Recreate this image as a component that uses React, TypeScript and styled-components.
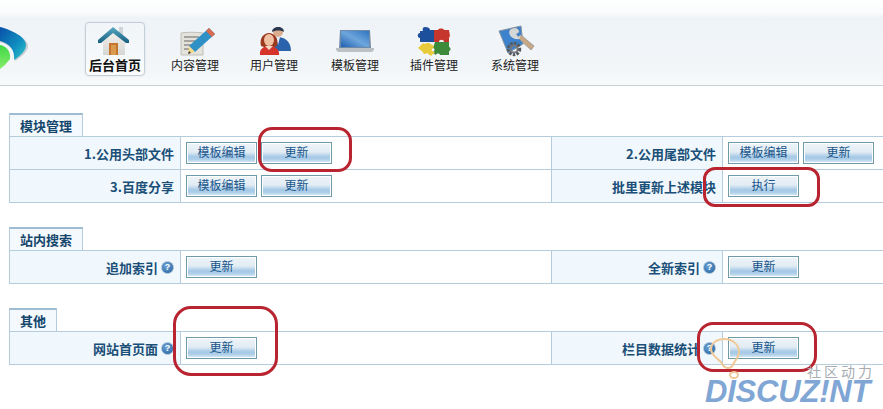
import React from 'react';
import styled, { createGlobalStyle } from 'styled-components';

const GlobalStyle = createGlobalStyle`
  html, body {
    margin: 0;
    padding: 0;
    background: #fff;
    overflow: hidden;
  }
  body {
    font-family: "Noto Sans CJK SC", "Liberation Sans", sans-serif;
    font-size: 12px;
  }
`;

const Page = styled.div`
  position: relative;
  width: 883px;
  height: 409px;
  overflow: hidden;
`;

const Header = styled.header`
  display: flex;
  align-items: flex-start;
  height: 86px;
  box-sizing: border-box;
  padding-top: 22px;
  background: linear-gradient(#fdfefe 0, #fbfcfd 12px, #eef3f7 18px, #f3f6f9 70px, #f8fafb 86px);
  border-bottom: 1px solid #c6d0d6;
`;

const Logo = styled.svg`
  flex: none;
  width: 30px;
  height: 44px;
  margin: 5px 55px 0 0;
`;

const Nav = styled.nav`
  display: flex;
`;

const NavItem = styled.a<{ $active?: boolean; $width: number }>`
  display: flex;
  flex-direction: column;
  align-items: center;
  box-sizing: border-box;
  width: ${(p) => p.$width}px;
  height: 54px;
  padding-top: 3px;
  color: #222;
  font-size: 12px;
  line-height: 16px;
  border-radius: 4px;
  ${(p) =>
    p.$active &&
    `
    margin-right: 10px;
    font-weight: 700;
    font-size: 13px;
    color: #111;
    background: linear-gradient(#f1f5f8, #f9fbfc);
    border: 1px solid #c3ced6;
    box-shadow: 0 0 2px #d5dde3;
    padding-top: 2px;
  `}
`;

const NavIcon = styled.svg`
  flex: none;
  width: 36px;
  height: 32px;
  overflow: visible;
`;

const Content = styled.main`
  padding: 27px 0 0 9px;
  width: 874px;
`;

const Section = styled.section`
  margin-bottom: 24px;
`;

const Tab = styled.div`
  width: fit-content;
  box-sizing: border-box;
  height: 23px;
  padding: 0 10px;
  line-height: 21px;
  font-size: 13px;
  font-weight: 700;
  color: #14456b;
  background: #f3f9fd;
  border: 1px solid #b4ccdc;
  border-top: 2px solid #9fbdd2;
  border-bottom: 0;
`;

const Table = styled.div`
  display: grid;
  grid-template-columns: 172px 370px 172px 160px;
  grid-auto-rows: 33px;
  border-bottom: 1px solid #b4ccdc;
`;

const Label = styled.div`
  display: flex;
  align-items: center;
  justify-content: flex-end;
  gap: 3px;
  padding-right: 6px;
  font-size: 13px;
  font-weight: 700;
  color: #1a4f78;
  background: #f1f8fd;
  border-top: 1px solid #b4ccdc;
  border-left: 1px solid #b4ccdc;
  border-right: 1px solid #b4ccdc;
`;

const Value = styled.div`
  display: flex;
  align-items: center;
  gap: 4px;
  padding-left: 5px;
  background: #fff;
  border-top: 1px solid #b4ccdc;
`;

const Button = styled.button`
  box-sizing: border-box;
  width: 71px;
  height: 22px;
  padding: 0 0 3px;
  font-family: inherit;
  font-size: 12px;
  line-height: 16px;
  color: #17558a;
  border: 1px solid #6f9aa8;
  background: linear-gradient(#eef4f9 0, #e2ecf4 45%, #a4c8e6 70%, #b2d1ea 84%, #e8f1f8 100%);
  box-shadow: inset 0 0 0 1px #fff;
`;

const Help = styled.span`
  flex: none;
  box-sizing: border-box;
  width: 13px;
  height: 13px;
  border-radius: 50%;
  background: radial-gradient(circle at 40% 35%, #6ea3d6, #1f5f9e);
  border: 1px solid #a9c0d4;
  color: #fff;
  font-family: "Liberation Sans", sans-serif;
  font-size: 9px;
  font-weight: 700;
  line-height: 11px;
  text-align: center;
`;

const Ring = styled.div<{ $x: number; $y: number; $w: number; $h: number; $r: number }>`
  position: absolute;
  left: ${(p) => p.$x}px;
  top: ${(p) => p.$y}px;
  width: ${(p) => p.$w}px;
  height: ${(p) => p.$h}px;
  box-sizing: border-box;
  border: 3px solid #b8242f;
  border-radius: ${(p) => p.$r}px;
  pointer-events: none;
`;

const Watermark = styled.div`
  position: absolute;
  left: 703px;
  top: 361px;
  width: 180px;
  pointer-events: none;
`;

const WatermarkCaption = styled.div`
  position: absolute;
  left: 104px;
  top: 4px;
  font-size: 14px;
  line-height: 13px;
  letter-spacing: 3px;
  color: #a7adb3;
  white-space: nowrap;
`;

const WatermarkBrand = styled.div`
  position: absolute;
  left: 2px;
  top: 16px;
  font-family: "Liberation Sans", sans-serif;
  font-size: 31px;
  line-height: 30px;
  font-weight: 700;
  font-style: italic;
  letter-spacing: -0.2px;
  color: #7fa6d4;
  white-space: nowrap;
`;

const Bulb = styled.svg`
  position: absolute;
  left: 706px;
  top: 337px;
  width: 36px;
  height: 44px;
  pointer-events: none;
`;

const HomeIcon = () => (
  <NavIcon viewBox="0 0 36 32">
    <defs>
      <linearGradient id="roof" x1="0" y1="0" x2="0" y2="1">
        <stop offset="0" stopColor="#58aac4" />
        <stop offset="1" stopColor="#175f80" />
      </linearGradient>
      <linearGradient id="wall" x1="0" y1="0" x2="0" y2="1">
        <stop offset="0" stopColor="#f5f3ee" />
        <stop offset="1" stopColor="#d6d6d2" />
      </linearGradient>
    </defs>
    <rect x="22" y="2" width="4" height="9" fill="#cfd4d8" />
    <path d="M6 13 17 5l11 8v17H6z" fill="url(#wall)" />
    <path d="M12 18h9v12h-9z" fill="#c5752e" />
    <path d="M14 20h5v10h-5z" fill="#d99a4e" />
    <path d="M1 15 16 2l16 13v3l-3 0L16 8 4 18H1z" fill="url(#roof)" />
  </NavIcon>
);

const NoteIcon = () => (
  <NavIcon viewBox="0 0 36 32">
    <path d="M4 8c6-1 15-1 22 0v22H4z" fill="#e4e3db" stroke="#c0c0b8" />
    <path d="M7 12h15M7 16h13M7 20h8M7 24h5" stroke="#8f8f8a" strokeWidth="1.5" />
    <path d="M32 3l6 6-20 18-6-6z" fill="#2f90c6" />
    <path d="M32 3l6 6-3 3-6-6z" fill="#dc6a4e" />
    <path d="M12 21l6 6-7 2z" fill="#f2d88a" />
    <path d="M12 26l-1 3 3-1z" fill="#333" />
  </NavIcon>
);

const UsersIcon = () => (
  <NavIcon viewBox="0 0 36 32">
    <path d="M14 26c0-8 3-14 8-14s13 3 13 14z" fill="#2a63ab" />
    <path d="M20 12h4l-2 8z" fill="#e8eef5" />
    <circle cx="22" cy="7" r="5" fill="#dcae90" />
    <path d="M16 7c0-6 12-7 12 0-3-2-8-2-12 0z" fill="#2c3750" />
    <path d="M5 21c-2-8 3-13 8-13s10 5 8 13l-3 1H8z" fill="#9c3a20" />
    <ellipse cx="13" cy="15" rx="5" ry="6" fill="#efc0a2" />
    <path d="M4 30c-1-6 4-9 9-9s11 3 10 9z" fill="#d5342b" />
    <path d="M9 21l4 4 4-4z" fill="#f6dcc9" />
  </NavIcon>
);

const LaptopIcon = () => (
  <NavIcon viewBox="0 0 36 32">
    <defs>
      <linearGradient id="screen" x1="0" y1="1" x2="1" y2="0">
        <stop offset="0" stopColor="#1f5fb0" />
        <stop offset="0.5" stopColor="#6ea6dc" />
        <stop offset="1" stopColor="#2f74c0" />
      </linearGradient>
    </defs>
    <path d="M3 5h30l1 18H2z" fill="#6f8aa6" />
    <path d="M4 6h28v16H4z" fill="url(#screen)" />
    <path d="M-1 23h38v2l-2 2H1l-2-2z" fill="#bcc1c6" />
  </NavIcon>
);

const PuzzleIcon = () => (
  <NavIcon viewBox="0 0 36 32">
    <path d="M9 2c3 0 5 1 5 3h5v12H4v-4c-3 0-3-5 0-5V6h3c-1-2 0-4 2-4z" fill="#1c4f9c" />
    <path d="M18 5h4c0-2 6-2 6 0h5c0 3 2 5 0 8v4H28c0-3-5-3-5 0h-5z" fill="#c6362c" />
    <path d="M19 17h14v5c2 0 2 4 0 4v4H24c0-2-4-2-4 0-2-1-3-2-3-3 2-1 2-4 0-4z" fill="#3c8a3a" />
    <path d="M2 23l5-5c2 2 4-1 6 0l5 3c-1 3-3 3-2 5l3 1-4 4-4-3c-2 2-4 1-4-1z" fill="#e8cb3c" />
  </NavIcon>
);

const ToolsIcon = () => (
  <NavIcon viewBox="0 0 36 32">
    <path d="M2 6l22-5 2 18-15 9z" fill="#3c82cc" stroke="#8894a0" />
    <path d="M13 5c4-3 9-2 9 2l-3 2 2 3 3-2 13 11-3 4-13-12c-5 1-9-3-8-8z" fill="#c8a884" stroke="#8a8f94" strokeWidth="0.7" />
    <path d="M13 5c4-3 9-2 9 2l-3 2 2 3 3-2-2 4c-5 1-12-3-9-9z" fill="#d3d7da" />
    <circle cx="17" cy="24" r="5.5" fill="none" stroke="#55585c" strokeWidth="3.5" strokeDasharray="2.4 1.2" />
    <circle cx="17" cy="24" r="3.6" fill="none" stroke="#74777b" strokeWidth="2" />
  </NavIcon>
);

const App: React.FC = () => {
  return (
    <Page>
      <GlobalStyle />
      <Header>
        <Logo viewBox="0 0 30 44">
          <defs>
            <linearGradient id="leaf" x1="0" y1="0" x2="1" y2="1">
              <stop offset="0" stopColor="#0a4fa8" />
              <stop offset="0.6" stopColor="#0f90c0" />
              <stop offset="1" stopColor="#36c6c8" />
            </linearGradient>
            <linearGradient id="leafGreen" x1="0" y1="0" x2="0" y2="1">
              <stop offset="0" stopColor="#3fd848" />
              <stop offset="1" stopColor="#86ec6a" />
            </linearGradient>
          </defs>
          <path d="M0 1c12 3 28 10 28 18 0 6-7 11-13 15 1-9-4-16-15-19z" fill="#aab2b8" opacity="0.6" />
          <path d="M0 0c12 3 26 10 26 18 0 6-6 11-12 15 1-9-3-16-14-19z" fill="url(#leaf)" />
          <path d="M0 18c6 1 11 6 10 14-3 4-6 7-10 10z" fill="url(#leafGreen)" />
        </Logo>
        <Nav>
          <NavItem $active $width={60}><HomeIcon />后台首页</NavItem>
          <NavItem $width={80}><NoteIcon />内容管理</NavItem>
          <NavItem $width={78}><UsersIcon />用户管理</NavItem>
          <NavItem $width={84}><LaptopIcon />模板管理</NavItem>
          <NavItem $width={74}><PuzzleIcon />插件管理</NavItem>
          <NavItem $width={88}><ToolsIcon />系统管理</NavItem>
        </Nav>
      </Header>

      <Content>
        <Section>
          <Tab>模块管理</Tab>
          <Table>
            <Label>1.公用头部文件</Label>
            <Value>
              <Button>模板编辑</Button>
              <Button>更新</Button>
            </Value>
            <Label>2.公用尾部文件</Label>
            <Value>
              <Button>模板编辑</Button>
              <Button>更新</Button>
            </Value>
            <Label>3.百度分享</Label>
            <Value>
              <Button>模板编辑</Button>
              <Button>更新</Button>
            </Value>
            <Label>批里更新上述模块</Label>
            <Value>
              <Button>执行</Button>
            </Value>
          </Table>
        </Section>

        <Section>
          <Tab>站内搜索</Tab>
          <Table>
            <Label>追加索引<Help>?</Help></Label>
            <Value><Button>更新</Button></Value>
            <Label>全新索引<Help>?</Help></Label>
            <Value><Button>更新</Button></Value>
          </Table>
        </Section>

        <Section>
          <Tab>其他</Tab>
          <Table>
            <Label>网站首页面<Help>?</Help></Label>
            <Value><Button>更新</Button></Value>
            <Label>栏目数据统计<Help>?</Help></Label>
            <Value><Button>更新</Button></Value>
          </Table>
        </Section>
      </Content>

      <Ring $x={258} $y={127} $w={94} $h={45} $r={14} />
      <Ring $x={703} $y={167} $w={117} $h={40} $r={12} />
      <Ring $x={173} $y={306} $w={105} $h={70} $r={18} />
      <Ring $x={697} $y={322} $w={120} $h={50} $r={16} />

      <Bulb viewBox="0 0 36 44">
        <path
          d="M18 2c9 0 15 6 15 13 0 6-5 9-6 13-1 2-2 3-5 3-5 0-5-3-7-6C11 21 5 18 5 12 5 6 11 2 18 2z"
          fill="none"
          stroke="#efc998"
          strokeWidth="2"
        />
        <ellipse cx="28" cy="38" rx="4" ry="3" fill="none" stroke="#efc998" strokeWidth="2" />
      </Bulb>

      <Watermark>
        <WatermarkCaption>社区动力</WatermarkCaption>
        <WatermarkBrand>DISCUZ!NT</WatermarkBrand>
      </Watermark>
    </Page>
  );
};

export default App;
